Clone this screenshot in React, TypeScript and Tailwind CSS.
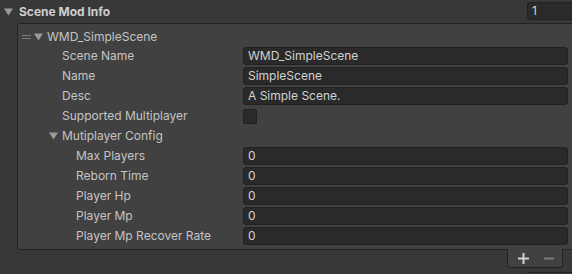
import React from "react"

interface Field {
  label: string
  value?: string
  kind?: "text" | "check" | "fold"
  indent?: number
}

const fields: Field[] = [
  { label: "Scene Name", value: "WMD_SimpleScene" },
  { label: "Name", value: "SimpleScene" },
  { label: "Desc", value: "A Simple Scene." },
  { label: "Supported Multiplayer", kind: "check" },
  { label: "Mutiplayer Config", kind: "fold" },
  { label: "Max Players", value: "0", indent: 1 },
  { label: "Reborn Time", value: "0", indent: 1 },
  { label: "Player Hp", value: "0", indent: 1 },
  { label: "Player Mp", value: "0", indent: 1 },
  { label: "Player Mp Recover Rate", value: "0", indent: 1 },
]

const Fold = ({ className = "" }: { className?: string }) => (
  <svg width="9" height="8" viewBox="0 0 9 8" className={className}>
    <path d="M0 0.5 H9 L4.5 7.5 Z" fill="#9a9a9a" />
  </svg>
)

const Input = ({ value }: { value: string }) => (
  <div className="flex-1 h-[18px] flex items-center pl-[4px] rounded-[3px] bg-[#2a2a2a] border border-[#212121] text-[#d2d2d2]">
    {value}
  </div>
)

export default function App() {
  return (
    <div
      className="w-[572px] h-[274px] bg-[#383838] text-[12px] text-[#c4c4c4] overflow-hidden relative"
      style={{ fontFamily: "Inter, 'Noto Sans', sans-serif" }}
    >
      {/* header */}
      <div className="h-[23px] flex items-center">
        <Fold className="ml-[4px] mr-[6px]" />
        <span className="font-bold text-[#cfcfcf] flex-1">Scene Mod Info</span>
        <div className="w-[48px] h-[18px] mr-[-3px] mt-[-2px] flex items-center pl-[4px] rounded-[3px] bg-[#2a2a2a] border border-[#212121] text-[#d2d2d2]">
          1
        </div>
      </div>

      {/* list box */}
      <div className="ml-[17px] mr-[-2px] border border-[#232323] bg-[#414141] rounded-[3px] pt-[2px] pb-[3px]">
        <div className="h-[20px] pt-[2px] flex items-center">
          <div className="ml-[4px] w-[9px] flex flex-col gap-[2px]">
            <div className="h-px bg-[#7a7a7a]" />
            <div className="h-px bg-[#7a7a7a]" />
          </div>
          <Fold className="ml-[3px] mr-[4px]" />
          <span>WMD_SimpleScene</span>
        </div>
        {fields.map((f) => (
          <div key={f.label} className="h-[20px] flex items-center pr-[5px]">
            <div
              className={`w-[225px] flex items-center ${
                f.indent ? "pl-[58px]" : f.kind === "fold" ? "pl-[31px]" : "pl-[44px]"
              }`}
            >
              {f.kind === "fold" && <Fold className="mr-[4px]" />}
              <span className="whitespace-nowrap">{f.label}</span>
            </div>
            {f.kind === "check" && (
              <div className="w-[14px] h-[15px] rounded-[2px] bg-[#2a2a2a] border border-[#1f1f1f]" />
            )}
            {f.value !== undefined && <Input value={f.value} />}
          </div>
        ))}
      </div>

      {/* add / remove tab */}
      <div className="flex justify-end pr-[9px]">
        <div className="mt-[-1px] w-[56px] h-[19px] bg-[#414141] border border-t-0 border-[#232323] rounded-b-[3px] flex items-center pl-[10px] gap-[15px]">
          <svg width="11" height="11" viewBox="0 0 11 11">
            <path d="M4.5 0 H6.5 V4.5 H11 V6.5 H6.5 V11 H4.5 V6.5 H0 V4.5 H4.5 Z" fill="#d0d0d0" />
          </svg>
          <svg width="10" height="11" viewBox="0 0 10 11">
            <rect x="0" y="4.5" width="10" height="2" fill="#7c7c7c" />
          </svg>
        </div>
      </div>

      <div className="absolute left-[527px] right-0 top-[272px] h-px bg-[#232323]" />
    </div>
  )
}
